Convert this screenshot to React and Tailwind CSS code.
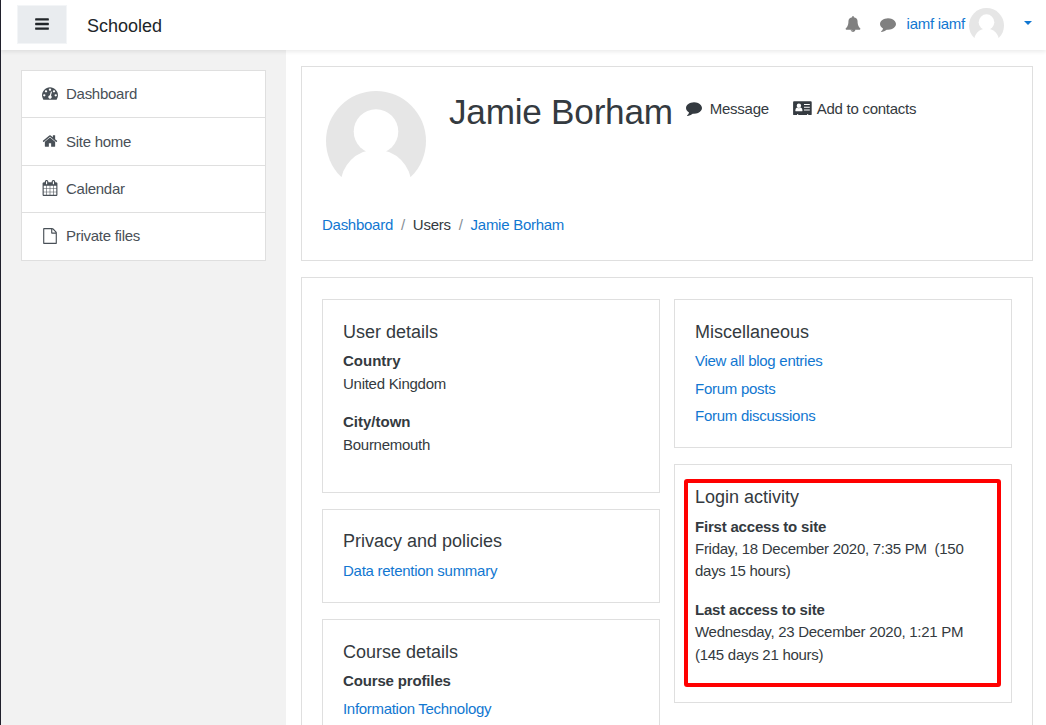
const ICONS = {
  bars: "M1664 1344v128q0 26-19 45t-45 19h-1408q-26 0-45-19t-19-45v-128q0-26 19-45t45-19h1408q26 0 45 19t19 45zm0-512v128q0 26-19 45t-45 19h-1408q-26 0-45-19t-19-45v-128q0-26 19-45t45-19h1408q26 0 45 19t19 45zm0-512v128q0 26-19 45t-45 19h-1408q-26 0-45-19t-19-45v-128q0-26 19-45t45-19h1408q26 0 45 19t19 45z",
  home: "M1472 992v480q0 26-19 45t-45 19h-384v-384h-256v384h-384q-26 0-45-19t-19-45v-480q0-1 .5-3t.5-3l575-474 575 474q1 2 1 6zm223-69l-62 74q-8 9-21 11h-3q-13 0-21-7l-692-577-692 577q-12 8-24 7-13-2-21-11l-62-74q-8-10-7-23.5t11-21.5l719-599q32-26 76-26t76 26l244 204v-195q0-14 9-23t23-9h192q14 0 23 9t9 23v408l219 182q10 8 11 21.5t-7 23.5z",
  comment: "M1792 896q0 174-120 321.5t-326 233-450 85.5q-70 0-145-8-198 175-460 242-49 14-114 22-17 2-30.5-9t-17.5-29v-1q-3-4-.5-12t2-10 4.5-9.5l6-9 7-8.5 8-9q7-8 31-34.5t34.5-38 31-39.5 32.5-51 27-59 26-76q-157-89-247.5-220t-90.5-281q0-130 71-248.5t191-204.5 286-136.5 348-50.5q244 0 450 85.5t326 233 120 321.5z",
  bell: "M912 1696q0-16-16-16-59 0-101.5-42.5t-42.5-101.5q0-16-16-16t-16 16q0 73 51.5 124.5t124.5 51.5q16 0 16-16zm816-288q0 52-38 90t-90 38h-448q0 106-75 181t-181 75-181-75-75-181h-448q-52 0-90-38t-38-90q50-42 91-88t85-119.5 74.5-158.5 50-206 19.5-260q0-152 117-282.5t307-158.5q-8-19-8-39 0-40 28-68t68-28 68 28 28 68q0 20-8 39 190 28 307 158.5t117 282.5q0 139 19.5 260t50 206 74.5 158.5 85 119.5 91 88z",
  calendar: "M192 1664h288v-288h-288v288zm352 0h320v-288h-320v288zm-352-352h288v-320h-288v320zm352 0h320v-320h-320v320zm-352-384h288v-288h-288v288zm736 736h320v-288h-320v288zm-384-736h320v-288h-320v288zm768 736h288v-288h-288v288zm-384-352h320v-320h-320v320zm-352-864v-288q0-13-9.5-22.5t-22.5-9.5h-64q-13 0-22.5 9.5t-9.5 22.5v288q0 13 9.5 22.5t22.5 9.5h64q13 0 22.5-9.5t9.5-22.5zm736 864h288v-320h-288v320zm-384-384h320v-288h-320v288zm384 0h288v-288h-288v288zm32-480v-288q0-13-9.5-22.5t-22.5-9.5h-64q-13 0-22.5 9.5t-9.5 22.5v288q0 13 9.5 22.5t22.5 9.5h64q13 0 22.5-9.5t9.5-22.5zm384-64v1280q0 52-38 90t-90 38h-1408q-52 0-90-38t-38-90v-1280q0-52 38-90t90-38h128v-96q0-66 47-113t113-47h64q66 0 113 47t47 113v96h384v-96q0-66 47-113t113-47h64q66 0 113 47t47 113v96h128q52 0 90 38t38 90z",
  file: "M1596 380q28 28 48 76t20 88v1152q0 40-28 68t-68 28h-1344q-40 0-68-28t-28-68v-1600q0-40 28-68t68-28h896q40 0 88 20t76 48zm-444-244v376h376q-10-29-22-41l-313-313q-12-12-41-22zm384 1528v-1024h-416q-40 0-68-28t-28-68v-416h-768v1536h1280z",
  gauge: "M384 1152q0-53-37.5-90.5t-90.5-37.5-90.5 37.5-37.5 90.5 37.5 90.5 90.5 37.5 90.5-37.5 37.5-90.5zm192-448q0-53-37.5-90.5t-90.5-37.5-90.5 37.5-37.5 90.5 37.5 90.5 90.5 37.5 90.5-37.5 37.5-90.5zm428 481l101-382q6-26-7.5-48.5t-38.5-29.5-48 6.5-30 39.5l-101 382q-60 5-107 43.5t-63 98.5q-20 77 20 146t117 89 146-20 89-117q16-60-6-117t-72-91zm660-33q0-53-37.5-90.5t-90.5-37.5-90.5 37.5-37.5 90.5 37.5 90.5 90.5 37.5 90.5-37.5 37.5-90.5zm-640-640q0-53-37.5-90.5t-90.5-37.5-90.5 37.5-37.5 90.5 37.5 90.5 90.5 37.5 90.5-37.5 37.5-90.5zm448 192q0-53-37.5-90.5t-90.5-37.5-90.5 37.5-37.5 90.5 37.5 90.5 90.5 37.5 90.5-37.5 37.5-90.5zm320 448q0 261-141 483-19 29-54 29h-1402q-35 0-54-29-141-221-141-483 0-182 71-348t191-286 286-191 348-71 348 71 286 191 191 286 71 348z",
};

function Icon({ name, className = "" }) {
  return (
    <svg viewBox="0 0 1792 1792" className={`size-4 shrink-0 fill-current ${className}`} aria-hidden="true">
      <path d={ICONS[name]} />
    </svg>
  );
}

function ContactCard() {
  return (
    <svg viewBox="0 0 19 16" className="mb-0.5 h-4 w-[19px] shrink-0" aria-hidden="true">
      <path
        fill="currentColor"
        d="M1 1.300h16.800q.9 0 .9.900v12q0 .9-.9.900H15.300v-.7q0-.3-.3-.3h-.6q-.3 0-.3.300v.7H5.300v-.7q0-.3-.3-.3h-.6q-.3 0-.3.300v.7H1q-.9 0-.9-.900V2.200q0-.9.900-.900z"
      />
      <circle cx="5.900" cy="5.800" r="2.200" fill="#fff" />
      <path fill="#fff" d="M4 7.400q1.900 1.500 3.800 0 1.600.5 1.700 3 0 .9-1 .9H3.300q-1 0-1-.9.100-2.500 1.700-3zM11 4h5.800v1.100H11zM11 6.700h5.800v1.100H11zM11 9.400h5.800v1.100H11z" />
    </svg>
  );
}

function Avatar({ className }) {
  return (
    <svg viewBox="0 0 100 100" className={className} aria-hidden="true">
      <circle cx="50" cy="50" r="50" fill="#e6e6e6" />
      <circle cx="50" cy="40.500" r="22.300" fill="#fff" />
      <circle cx="50" cy="94" r="35.500" fill="#fff" />
      <rect x="10" y="86" width="80" height="14" fill="#fff" />
    </svg>
  );
}

function Link({ children, className = "" }) {
  return <a href="#" className={`text-[#1177d1] ${className}`}>{children}</a>;
}

function Card({ title, className = "pt-[21px]", titleClass = "mb-[6.9px]", children }) {
  return (
    <section className={`relative border border-[#dfdfdf] bg-white px-5 ${className}`}>
      <h3 className={`text-lg leading-[22.5px] tracking-normal ${titleClass}`}>{title}</h3>
      {children}
    </section>
  );
}

function Detail({ term, termClass = "", children }) {
  return (
    <dl className="mb-4">
      <dt className={`font-bold ${termClass}`}>{term}</dt>
      <dd>{children}</dd>
    </dl>
  );
}

const NAV = [
  ["gauge", "Dashboard", "h-[47px]"],
  ["home", "Site home", "h-12 pt-px"],
  ["calendar", "Calendar", "h-[47px]"],
  ["file", "Private files", "h-12"],
];

export default function App() {
  return (
    <div className="flex h-[725px] w-[1046px] flex-col overflow-hidden border-l border-[#20202c] bg-white font-['Liberation_Sans',Arial,sans-serif] text-[15px] leading-[22.4px] tracking-[-0.27px] text-[#343a40]">
      <header className="relative z-10 flex h-[50px] shrink-0 items-start bg-white shadow-[0_2px_4px_rgba(0,0,0,0.08)]">
        <button className="mt-[5px] ml-4 flex h-[39px] w-[50px] items-center justify-center border border-[#f3f5f7] bg-[#e9ecef] text-[#212529]">
          <Icon name="bars" className="mb-px" />
        </button>
        <div className="mt-[14px] ml-5 text-lg leading-6 tracking-normal text-[#212529]">Schooled</div>
        <div className="ml-auto flex h-[48px] items-center text-[#808080]">
          <Icon name="bell" className="mr-[19px]" />
          <Icon name="comment" className="mr-[11px]" />
          <Link className="mr-1">iamf iamf</Link>
          <Avatar className="mt-[3px] size-[35px]" />
          <svg viewBox="0 0 8 4" className="mr-[14px] mb-0.5 ml-5 h-1 w-2" aria-hidden="true">
            <path d="M0 0h8L4 4z" fill="#1177d1" />
          </svg>
        </div>
      </header>
      <div className="flex min-h-0 flex-1">
        <aside className="w-[285px] shrink-0 bg-[#f2f2f2] pt-5 pl-5">
          <nav className="w-[245px] border border-b-0 border-[#dfdfdf] bg-white text-[#495057]">
            {NAV.map(([icon, label, height]) => (
              <a key={label} href="#" className={`flex items-center border-b border-[#dfdfdf] pl-5 ${height}`}>
                <Icon name={icon} className="mr-2 mb-0.5" />
                {label}
              </a>
            ))}
          </nav>
        </aside>
        <main className="flex flex-1 flex-col gap-4 pt-4 pr-[13px] pl-[15px]">
          <section className="h-[195px] shrink-0 border border-[#dfdfdf] pt-6 pl-5">
            <div className="flex h-[123px] items-start">
              <Avatar className="ml-1 size-[100px]" />
              <h1 className="ml-[23px] text-[35.15px] leading-[42px] tracking-[-0.23px]">Jamie Borham</h1>
              <div className="mt-[7px] ml-[13px] flex items-center">
                <Icon name="comment" className="mr-2 mb-0.5" />
                Message
              </div>
              <div className="mt-[7px] ml-6 flex items-center">
                <ContactCard />
                <span className="ml-[5px]">Add to contacts</span>
              </div>
            </div>
            <div className="flex gap-2">
              <Link>Dashboard</Link>
              <span className="text-[#868e96]">/</span>
              <span>Users</span>
              <span className="text-[#868e96]">/</span>
              <Link>Jamie Borham</Link>
            </div>
          </section>
          <section className="flex min-h-0 flex-1 items-start gap-[14px] border border-b-0 border-[#dfdfdf] px-5 pt-[21px]">
            <div className="flex w-[338px] flex-col gap-4">
              <Card title="User details" className="h-[194px] pt-[21px]">
                <Detail term="Country" termClass="tracking-normal">United Kingdom</Detail>
                <Detail term="City/town" termClass="tracking-normal">Bournemouth</Detail>
              </Card>
              <Card title="Privacy and policies" className="h-[94px] pt-[20.4px]">
                <Link>Data retention summary</Link>
              </Card>
              <Card title="Course details" className="h-[140px] pt-[21px]">
                <div className="mb-[5px] font-bold tracking-[-0.15px]">Course profiles</div>
                <Link className="tracking-[-0.3px]">Information Technology</Link>
              </Card>
            </div>
            <div className="flex w-[338px] flex-col gap-4">
              <Card title="Miscellaneous" className="h-[149px] pt-[21px]">
                <div className="flex flex-col gap-[5px]">
                  <Link>View all blog entries</Link>
                  <Link>Forum posts</Link>
                  <Link>Forum discussions</Link>
                </div>
              </Card>
              <Card title="Login activity" className="h-[239px] pt-[21px]" titleClass="mb-[7.1px]">
                <Detail term="First access to site" termClass="tracking-[-0.2px]">
                  Friday, 18 December 2020, 7:35 PM&nbsp; (150 days 15 hours)
                </Detail>
                <Detail term="Last access to site" termClass="tracking-[-0.2px]">
                  Wednesday, 23 December 2020, 1:21 PM (145 days 21 hours)
                </Detail>
                <div className="absolute top-[14px] left-[9px] h-[208px] w-[317px] rounded-[3px] border-4 border-[#ff0000]" />
              </Card>
            </div>
          </section>
        </main>
      </div>
    </div>
  );
}
